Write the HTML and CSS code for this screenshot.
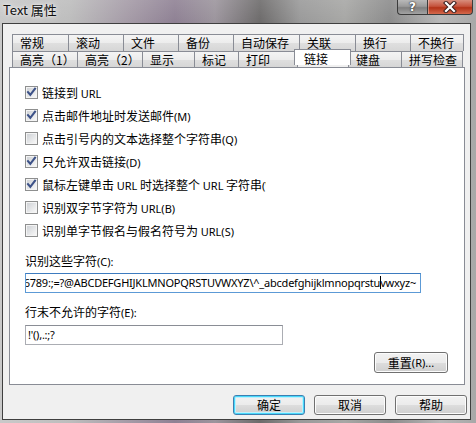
FILE: index.html
```html
<!DOCTYPE html>
<html lang="zh">
<head>
<meta charset="utf-8">
<title>Text 属性</title>
<link rel="stylesheet" href="styles.css">
</head>
<body>
<svg class="defs" width="0" height="0" aria-hidden="true">
  <defs>
    <linearGradient id="boxfill" x1="0" y1="0" x2="1" y2="1">
      <stop offset="0" stop-color="#cfd2d6"/>
      <stop offset="1" stop-color="#f7f7f7"/>
    </linearGradient>
    <symbol id="cb-off" viewBox="0 0 13 13">
      <rect x="0.5" y="0.5" width="12" height="12" fill="#f4f4f4" stroke="#8e8f8f"/>
      <rect x="2" y="2" width="9" height="9" fill="url(#boxfill)"/>
    </symbol>
    <symbol id="cb-on" viewBox="0 0 13 13">
      <rect x="0.5" y="0.5" width="12" height="12" fill="#f4f4f4" stroke="#8e8f8f"/>
      <rect x="2" y="2" width="9" height="9" fill="url(#boxfill)"/>
      <path d="M3 6.2 L5.3 8.8 L10 2.8" fill="none" stroke="#3d5288" stroke-width="2.1" stroke-linecap="square" stroke-linejoin="miter"/>
    </symbol>
  </defs>
</svg>
<div class="glass">
  <div class="titlebar">
    <span class="title">Text 属性</span>
    <div class="caption">
      <div class="capbtn help">?</div>
      <div class="capbtn close">
        <svg width="14" height="12" viewBox="0 0 14 12"><path d="M3 2 L11 10 M11 2 L3 10" stroke="#3a2020" stroke-width="4.2" stroke-linecap="square"/><path d="M3 2 L11 10 M11 2 L3 10" stroke="#ffffff" stroke-width="2.2" stroke-linecap="square"/></svg>
      </div>
    </div>
  </div>
  <div class="client">
    <div class="sheet">
      <div class="tabrow back">
        <div class="tab w56">常规</div>
        <div class="tab w55">滚动</div>
        <div class="tab w55">文件</div>
        <div class="tab w55">备份</div>
        <div class="tab w66">自动保存</div>
        <div class="tab w56">关联</div>
        <div class="tab w55">换行</div>
        <div class="tab w53">不换行</div>
      </div>
      <div class="tabrow front">
        <div class="tab w65">高亮（1）</div>
        <div class="tab w65">高亮（2）</div>
        <div class="tab w52">显示</div>
        <div class="tab w44">标记</div>
        <div class="tab w59">打印</div>
        <div class="tab w52 selected">链接</div>
        <div class="tab w53">键盘</div>
        <div class="tab w61">拼写检查</div>
      </div>
      <div class="panel">
        <div class="checks">
          <div class="check"><svg class="box"><use href="#cb-on"/></svg><span>链接到 <span class="lat">URL</span></span></div>
          <div class="check"><svg class="box"><use href="#cb-on"/></svg><span>点击邮件地址时发送邮件<span class="lat">(M)</span></span></div>
          <div class="check"><svg class="box"><use href="#cb-off"/></svg><span>点击引号内的文本选择整个字符串<span class="lat">(Q)</span></span></div>
          <div class="check"><svg class="box"><use href="#cb-on"/></svg><span>只允许双击链接<span class="lat">(D)</span></span></div>
          <div class="check"><svg class="box"><use href="#cb-on"/></svg><span class="clip">鼠标左键单击 <span class="lat">URL</span> 时选择整个 <span class="lat">URL</span> 字符串<span class="lat">(W)</span></span></div>
          <div class="check"><svg class="box"><use href="#cb-off"/></svg><span>识别双字节字符为 <span class="lat">URL(B)</span></span></div>
          <div class="check"><svg class="box"><use href="#cb-off"/></svg><span>识别单字节假名与假名符号为 <span class="lat">URL(S)</span></span></div>
        </div>
        <div class="label first">识别这些字符<span class="lat">(C):</span></div>
        <div class="field focused wide"><span class="fieldtext">0123456789:;=?@ABCDEFGHIJKLMNOPQRSTUVWXYZ\^_abcdefghijklmnopqrstu<span class="caret"></span>vwxyz~</span></div>
        <div class="label">行末不允许的字符<span class="lat">(E):</span></div>
        <div class="field narrow"><span class="fieldtext left">!'(),.:;?</span></div>
        <div class="reset-row"><div class="btn reset">重置<span class="lat">(R)...</span></div></div>
      </div>
      <div class="footer">
        <div class="btn default">确定</div>
        <div class="btn">取消</div>
        <div class="btn">帮助</div>
      </div>
    </div>
  </div>
</div>
</body>
</html>
```
FILE: styles.css
```css
html, body {
  margin: 0;
  padding: 0;
}
body {
  width: 476px;
  height: 423px;
  overflow: hidden;
  font-family: "Noto Sans CJK SC", "Noto Sans", sans-serif;
  font-size: 12px;
  color: #000;
}
.defs {
  position: absolute;
  width: 0;
  height: 0;
}
.glass {
  width: 476px;
  height: 423px;
  box-sizing: border-box;
  padding-left: 2px;
  background:
    linear-gradient(180deg, rgba(255,255,255,0.10) 0, rgba(255,255,255,0) 22px),
    linear-gradient(90deg, #c9c9c9 0, #bdbdbd 70px, #a49aa6 130px, #8f8194 175px, #9c959d 215px, #6d6b6b 260px, #9a9a9a 300px, #a7a7a5 345px, #8c8c8c 390px, #b7b7b7 440px, #a8a8a8 476px);
}
.titlebar {
  height: 23px;
  display: flex;
  justify-content: space-between;
  align-items: flex-start;
}
.title {
  margin-left: 1px;
  margin-top: 2px;
  font-size: 13px;
  line-height: 16px;
  color: #101010;
  text-shadow: 0 0 6px rgba(255,255,255,0.9), 0 0 3px rgba(255,255,255,0.8);
}
.caption {
  display: flex;
  margin-right: 3px;
}
.capbtn {
  height: 15px;
  box-sizing: border-box;
  border: 1px solid #3b3b3b;
  border-top: none;
  display: flex;
  align-items: center;
  justify-content: center;
}
.help {
  width: 30px;
  border-right: none;
  border-bottom-left-radius: 4px;
  background: linear-gradient(180deg, #b9b9b9 0, #9a9a9a 45%, #7f7f7f 55%, #a3a3a3 100%);
  color: #fff;
  font-family: "DejaVu Sans", sans-serif;
  font-weight: bold;
  font-size: 12px;
  line-height: 12px;
  text-shadow: 0 0 2px #222, 0 0 1px #222;
}
.close {
  width: 46px;
  border-bottom-right-radius: 4px;
  background: linear-gradient(180deg, #d88e7d 0, #c5533d 45%, #b33218 55%, #d4694c 100%);
  box-shadow: inset 1px 0 0 rgba(255,255,255,0.35);
}
.close svg {
  margin-top: -1px;
}
.client {
  width: 469px;
  height: 397px;
  box-sizing: border-box;
  border: 1px solid #3f3f3f;
  background: #f0f0f0;
}
.sheet {
  padding: 10px 3px 0 6px;
}
.tabrow {
  display: flex;
  margin-left: 3px;
  height: 17px;
}
.tabrow.front {
  height: 16px;
}
.tab {
  box-sizing: border-box;
  height: 17px;
  border: 1px solid #898c95;
  border-bottom: none;
  margin-right: -1px;
  background: linear-gradient(180deg, #f4f4f4 0, #ececec 50%, #dfdfdf 51%, #d6d6d6 100%);
  font-size: 12px;
  line-height: 15px;
  padding-left: 7px;
  white-space: nowrap;
}
.tabrow.front .tab {
  height: 16px;
}
.tab.selected {
  position: relative;
  z-index: 1;
  height: 19px;
  margin-top: -2px;
  margin-left: -3px;
  margin-right: -3px;
  padding-left: 9px;
  padding-top: 1px;
  background: #fff;
}
.w44 { width: 45px; }
.w52 { width: 53px; }
.w53 { width: 54px; }
.w55 { width: 56px; }
.w56 { width: 57px; }
.w59 { width: 60px; }
.w61 { width: 62px; }
.w65 { width: 66px; }
.w66 { width: 67px; }
.tab.selected.w52 { width: 57px; }
.panel {
  width: 456px;
  height: 318px;
  box-sizing: border-box;
  border: 1px solid #898c95;
  background: #fff;
  padding: 13px 0 0 15px;
  display: flex;
  flex-direction: column;
}
.checks {
  display: flex;
  flex-direction: column;
}
.check {
  height: 23px;
  display: flex;
  align-items: center;
  gap: 4px;
  white-space: nowrap;
}
.check .box {
  width: 13px;
  height: 13px;
  flex: none;
}
.clip {
  max-width: 224px;
  overflow: hidden;
}
.lat {
  font-family: "Noto Sans", "DejaVu Sans", sans-serif;
  font-size: 11px;
}
.label {
  margin-top: 11px;
  height: 16px;
  line-height: 16px;
}
.label.first {
  margin-top: 11px;
}
.field {
  box-sizing: border-box;
  height: 20px;
  margin-top: 4px;
  border: 1px solid #abadb3;
  border-top-color: #8a8d95;
  background: #fff;
  display: flex;
  align-items: center;
  overflow: hidden;
  white-space: nowrap;
}
.field.focused {
  border-color: #5c9ad6;
  border-top-color: #3d7bbf;
}
.field.wide {
  width: 396px;
  justify-content: flex-end;
  padding-right: 4px;
}
.field.narrow {
  width: 258px;
  margin-top: 5px;
  padding-left: 2px;
}
.fieldtext {
  font-family: "Noto Sans", "DejaVu Sans", sans-serif;
  font-size: 11px;
  line-height: 14px;
  letter-spacing: -0.22px;
  position: relative;
}
.caret {
  display: inline-block;
  width: 1px;
  height: 13px;
  margin-right: -1px;
  background: #000;
  vertical-align: -2px;
}
.reset-row {
  display: flex;
  justify-content: flex-end;
  margin-top: 7px;
  padding-right: 16px;
}
.btn {
  box-sizing: border-box;
  width: 72px;
  height: 20px;
  border: 1px solid #707070;
  border-radius: 3px;
  background: linear-gradient(180deg, #f2f2f2 0, #ebebeb 50%, #dddddd 51%, #cfcfcf 100%);
  box-shadow: inset 0 0 0 1px #fcfcfc;
  display: flex;
  align-items: center;
  justify-content: center;
  font-size: 12px;
  line-height: 14px;
}
.btn.reset {
  width: 74px;
  height: 21px;
}
.footer {
  display: flex;
  justify-content: flex-end;
  gap: 9px;
  margin-top: 10px;
}
.btn.default {
  border-color: #3c7fb1;
  box-shadow: inset 0 0 0 1px #48d8fb, inset 0 0 0 2px #bfeffc;
}
```
